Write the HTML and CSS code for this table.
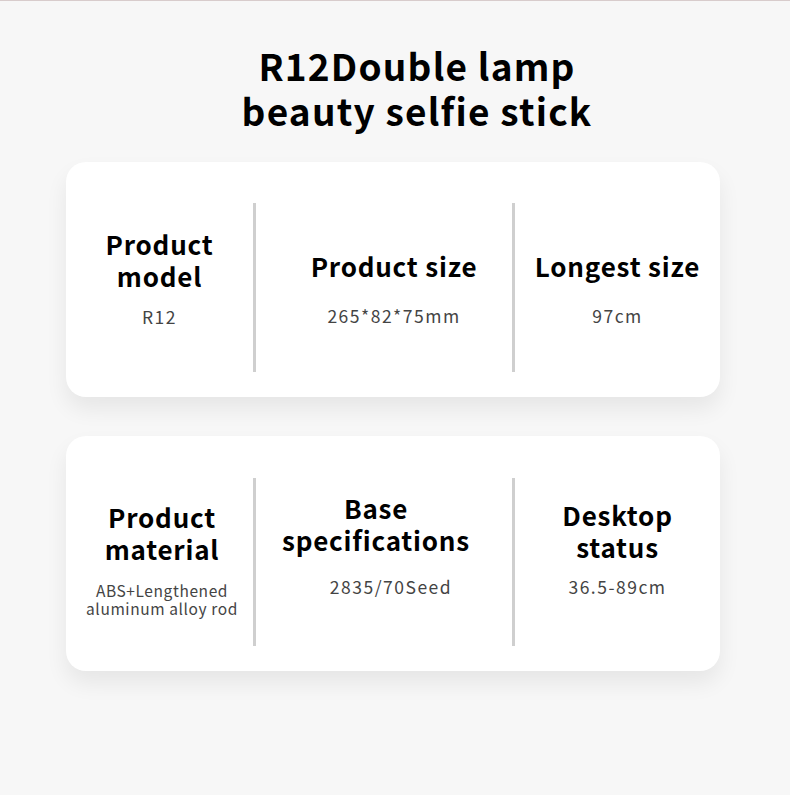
FILE: index.html
```html
<!DOCTYPE html>
<html>
<head>
<meta charset="utf-8">
<link rel="stylesheet" href="styles.css">
</head>
<body>
<div class="page">
  <h1 class="title">R12Double lamp<br>beauty selfie stick</h1>

  <section class="card card-one">
    <div class="cell c1">
      <div class="head">Product<br>model</div>
      <div class="val">R12</div>
    </div>
    <div class="divider"></div>
    <div class="cell c2">
      <div class="head">Product size</div>
      <div class="val">265*82*75mm</div>
    </div>
    <div class="divider"></div>
    <div class="cell c3">
      <div class="head">Longest size</div>
      <div class="val">97cm</div>
    </div>
  </section>

  <section class="card card-two">
    <div class="cell c1">
      <div class="head">Product<br>material</div>
      <div class="val small">ABS+Lengthened<br>aluminum alloy rod</div>
    </div>
    <div class="divider"></div>
    <div class="cell c2">
      <div class="head">Base<br>specifications</div>
      <div class="val">2835/70Seed</div>
    </div>
    <div class="divider"></div>
    <div class="cell c3">
      <div class="head">Desktop<br>status</div>
      <div class="val">36.5-89cm</div>
    </div>
  </section>
</div>
</body>
</html>
```

FILE: styles.css
```css
html, body {
  margin: 0;
  padding: 0;
}
body {
  background: #f7f7f7;
  border-top: 1px solid #d8cccc;
  font-family: "Noto Sans CJK SC", "Noto Sans", sans-serif;
  color: #000;
  width: 790px;
  height: 794px;
  overflow: hidden;
}
.page {
  display: flex;
  flex-direction: column;
  align-items: center;
}
.title {
  margin: 42px 0 0 0;
  padding-left: 44px;
  font-size: 37px;
  line-height: 45px;
  letter-spacing: 1.2px;
  font-weight: 700;
  text-align: center;
}
.card {
  width: 654px;
  height: 235px;
  margin-right: 4px;
  box-sizing: border-box;
  background: #fff;
  border-radius: 20px;
  box-shadow: 0 12px 22px rgba(0, 0, 0, 0.07);
  display: grid;
  grid-template-columns: 187px 3px 256px 3px 205px;
  align-items: start;
  padding: 41px 0 25px 0;
}
.card-one { margin-top: 29px; }
.card-two {
  margin-top: 39px;
  padding-top: 42px;
}
.divider {
  background: #cfcfcf;
  height: 169px;
}
.card-two .divider { height: 168px; }
.cell {
  display: flex;
  flex-direction: column;
  align-items: center;
  text-align: center;
}
.head {
  font-size: 26px;
  line-height: 32px;
  letter-spacing: 0.8px;
  font-weight: 700;
}
.val {
  font-size: 17.5px;
  line-height: 22px;
  letter-spacing: 1.5px;
  color: #444;
}
.val.small {
  font-size: 15.5px;
  line-height: 18.5px;
  letter-spacing: 0.6px;
}

/* card one */
.card-one .c1 { padding-top: 25px; }
.card-one .c1 .val { margin-top: 14px; }
.card-one .c2 { padding-top: 47px; padding-left: 20px; }
.card-one .c3 { padding-top: 47px; }
.card-one .c2 .val,
.card-one .c3 .val { margin-top: 23px; }

/* card two */
.card-two .c1 { padding-top: 23px; padding-left: 5px; }
.card-two .c1 .val { margin-top: 15.7px; }
.card-two .c2 { padding-top: 13.7px; }
.card-two .c2 .head { margin-right: 16px; }
.card-two .c2 .val { margin-top: 20px; margin-left: 14px; }
.card-two .c3 { padding-top: 21.4px; }
.card-two .c3 .val { margin-top: 12.2px; }
```
